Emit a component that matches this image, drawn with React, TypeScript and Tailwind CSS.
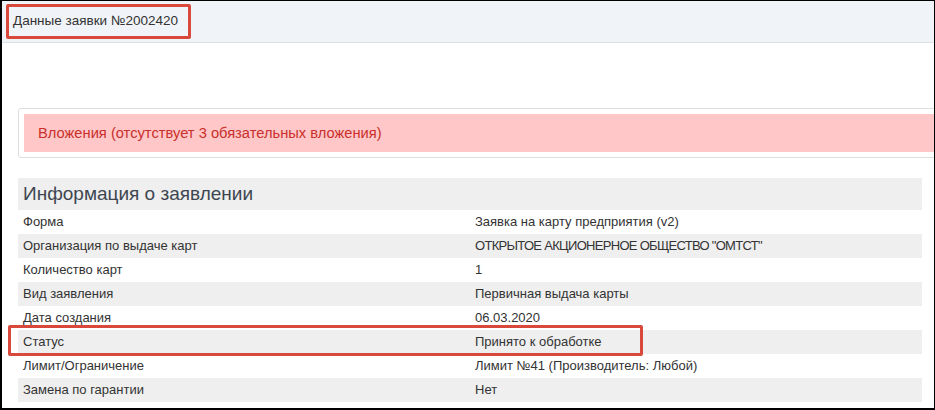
import React from "react";

const rows: [string, string, boolean?][] = [
  ["Форма", "Заявка на карту предприятия (v2)"],
  ["Организация по выдаче карт", "ОТКРЫТОЕ АКЦИОНЕРНОЕ ОБЩЕСТВО \"ОМТСТ\"", true],
  ["Количество карт", "1"],
  ["Вид заявления", "Первичная выдача карты"],
  ["Дата создания", "06.03.2020"],
  ["Статус", "Принято к обработке"],
  ["Лимит/Ограничение", "Лимит №41 (Производитель: Любой)"],
  ["Замена по гарантии", "Нет"],
];

export default function App() {
  return (
    <div
      className="relative w-[935px] h-[410px] overflow-hidden bg-white border-t border-r border-l-2 border-b-2 border-black text-[#333]"
      style={{ fontFamily: '"Liberation Sans", Arial, sans-serif' }}
    >
      <div className="h-[42px] bg-[#f0f4f9] border-b border-[#dcdfe4] flex items-center pl-[11px] text-[13.5px] text-[#333]">
        Данные заявки №2002420
      </div>

      <div className="ml-[16px] mt-[65px] w-[960px] border border-[#dedede] rounded-[3px] p-[5px]">
        <div className="h-[38px] bg-[#ffc7c7] flex items-center pl-[14px] text-[14.7px] text-[#c9302c]">
          Вложения (отсутствует 3 обязательных вложения)
        </div>
      </div>

      <div className="ml-[16px] mt-[20px] w-[904px]">
        <div className="h-[32px] bg-[#efefef] flex items-center pl-[5px] text-[19px] text-[#3d4650]">
          Информация о заявлении
        </div>
        {rows.map(([k, v, caps], i) => (
          <div
            key={k}
            className={`h-[24px] flex items-center text-[13px] text-[#333] ${i % 2 === 1 ? "bg-[#efefef]" : "bg-white"}`}
          >
            <div className="w-[457px] pl-[5px]">{k}</div>
            <div className={caps ? "tracking-[-0.7px]" : ""}>{v}</div>
          </div>
        ))}
      </div>

      <div className="absolute left-[4px] top-[3px] w-[185px] h-[35px] border-[3px] border-[#d9493b] rounded-[2px]" />
      <div className="absolute left-[6px] top-[324px] w-[635px] h-[31px] border-[3px] border-[#d9493b] rounded-[2px]" />
    </div>
  );
}
